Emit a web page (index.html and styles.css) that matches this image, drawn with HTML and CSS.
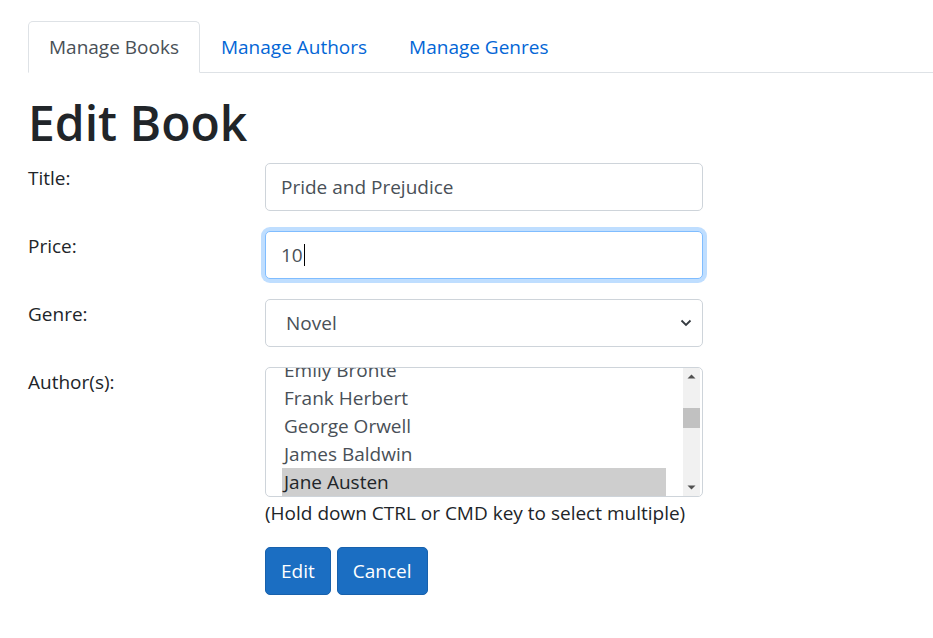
FILE: index.html
```html
<!DOCTYPE html>
<html lang="en">
<head>
<meta charset="utf-8">
<title>Edit Book</title>
<link rel="stylesheet" href="styles.css">
</head>
<body>
<div class="page">
  <ul class="tabs">
    <li class="tab active"><a href="#">Manage Books</a></li>
    <li class="tab"><a href="#">Manage Authors</a></li>
    <li class="tab"><a href="#">Manage Genres</a></li>
  </ul>
  <h1 class="title">Edit Book</h1>
  <form class="form">
    <label class="label">Title:</label>
    <div class="field"><div class="input">Pride and Prejudice</div></div>

    <label class="label">Price:</label>
    <div class="field"><div class="input focused">10<span class="caret"></span></div></div>

    <label class="label">Genre:</label>
    <div class="field">
      <div class="input select"><span>Novel</span>
        <svg class="chev" width="12" height="8" viewBox="0 0 12 8"><path d="M1.5 1.5 L6 6 L10.5 1.5" fill="none" stroke="#343a40" stroke-width="1.8"/></svg>
      </div>
    </div>

    <label class="label">Author(s):</label>
    <div class="field">
      <div class="listbox">
        <ul class="options">
          <li class="opt">Emily Bronte</li>
          <li class="opt">Frank Herbert</li>
          <li class="opt">George Orwell</li>
          <li class="opt">James Baldwin</li>
          <li class="opt selected">Jane Austen</li>
        </ul>
        <div class="scrollbar">
          <svg class="arrow" width="17" height="17" viewBox="0 0 17 17"><path d="M4.5 10.5 L8.5 6.5 L12.5 10.5 Z" fill="#505050"/></svg>
          <div class="track"><div class="thumb"></div></div>
          <svg class="arrow" width="17" height="17" viewBox="0 0 17 17"><path d="M4.5 6.5 L8.5 10.5 L12.5 6.5 Z" fill="#505050"/></svg>
        </div>
      </div>
      <div class="help">(Hold down CTRL or CMD key to select multiple)</div>
      <div class="buttons">
        <button type="button" class="btn">Edit</button>
        <button type="button" class="btn">Cancel</button>
      </div>
    </div>
  </form>
</div>
</body>
</html>
```
FILE: styles.css
```css
* { box-sizing: border-box; }
html, body { margin: 0; padding: 0; background: #fff; }
body {
  font-family: "Open Sans", "Noto Sans", sans-serif;
  font-size: 19px;
  line-height: 30px;
  color: #212529;
}
.page { padding: 21px 0 0 28px; }
.tabs {
  list-style: none;
  margin: 0;
  padding: 0;
  display: flex;
  border-bottom: 1px solid #dee2e6;
}
.tab { margin-bottom: -1px; }
.tab a {
  display: block;
  padding: 10px 20px;
  border: 1px solid transparent;
  border-radius: 5px 5px 0 0;
  color: #0366d6;
  text-decoration: none;
}
.tab.active a {
  color: #495057;
  background: #fff;
  border-color: #dee2e6 #dee2e6 #fff;
}
.title {
  margin: 20px 0 10px 0;
  font-size: 48px;
  line-height: 60px;
  font-weight: 600;
  color: #212529;
}
.form {
  display: grid;
  grid-template-columns: 237px 438px;
  row-gap: 20px;
}
.label { display: block; line-height: 30px; }
.input {
  height: 48px;
  border: 1px solid #ced4da;
  border-radius: 5px;
  padding: 8px 15px;
  color: #495057;
  background: #fff;
  display: flex;
  align-items: center;
}
.focused {
  border-color: #80bdff;
  box-shadow: 0 0 0 4px rgba(0, 123, 255, 0.25);
}
.caret {
  display: inline-block;
  width: 1px;
  height: 22px;
  background: #000;
  margin-left: 1px;
}
.select { justify-content: space-between; padding-left: 20px; padding-right: 10px; }
.listbox {
  height: 130px;
  border: 1px solid #ced4da;
  border-radius: 5px;
  overflow: hidden;
  display: flex;
  color: #495057;
}
.options {
  list-style: none;
  margin: -12px 0 0 0;
  padding: 0 0 0 16px;
  flex: 1;
}
.opt {
  height: 28px;
  line-height: 28px;
  padding-left: 2px;
  width: 384px;
}
.opt.selected { background: #cecece; color: #212529; }
.scrollbar {
  width: 17px;
  margin: 0 2px 0 0;
  background: #f1f1f1;
  display: flex;
  flex-direction: column;
}
.arrow { display: block; flex: none; }
.track { flex: 1; padding-top: 23px; }
.thumb { width: 17px; height: 20px; background: #c1c1c1; }
.help { line-height: 30px; color: #212529; margin-top: 1px; }
.buttons { margin-top: 19px; display: flex; gap: 6px; }
.btn {
  font: inherit;
  line-height: 30px;
  height: 48px;
  padding: 8px 15px;
  color: #fff;
  background: #1b6ec2;
  border: 1px solid #1861ac;
  border-radius: 5px;
}
```
